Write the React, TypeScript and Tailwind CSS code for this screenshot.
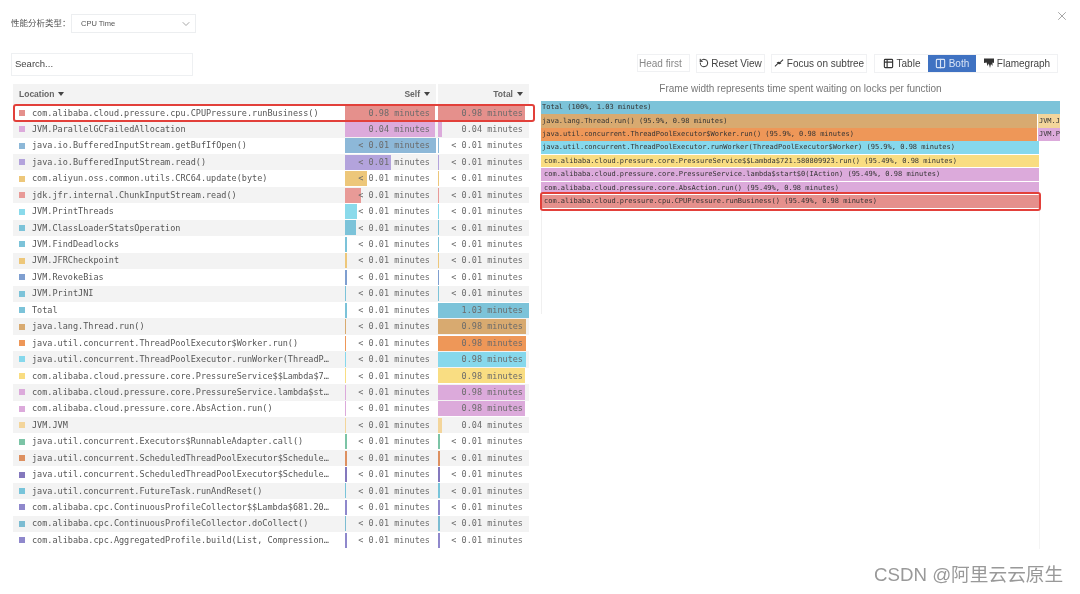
import { ChevronDown, Columns2, RotateCcw, Table2, X } from 'lucide-react'

type Row = {
  name: string
  color: string
  self: string
  total: string
  selfBar: number
  totalBar: number
}

const lt = '< 0.01 minutes'

const rows: Row[] = [
  { name: 'com.alibaba.cloud.pressure.cpu.CPUPressure.runBusiness()', color: '#e5908c', self: '0.98 minutes', total: '0.98 minutes', selfBar: 90, totalBar: 87 },
  { name: 'JVM.ParallelGCFailedAllocation', color: '#dcaadb', self: '0.04 minutes', total: '0.04 minutes', selfBar: 90, totalBar: 4 },
  { name: 'java.io.BufferedInputStream.getBufIfOpen()', color: '#8db8d8', self: lt, total: lt, selfBar: 91, totalBar: 1 },
  { name: 'java.io.BufferedInputStream.read()', color: '#b3a3dc', self: lt, total: lt, selfBar: 46, totalBar: 1 },
  { name: 'com.aliyun.oss.common.utils.CRC64.update(byte)', color: '#edc77a', self: lt, total: lt, selfBar: 22, totalBar: 1 },
  { name: 'jdk.jfr.internal.ChunkInputStream.read()', color: '#e89a97', self: lt, total: lt, selfBar: 16, totalBar: 1 },
  { name: 'JVM.PrintThreads', color: '#8adaeb', self: lt, total: lt, selfBar: 12, totalBar: 1 },
  { name: 'JVM.ClassLoaderStatsOperation', color: '#7cc3d9', self: lt, total: lt, selfBar: 11, totalBar: 1 },
  { name: 'JVM.FindDeadlocks', color: '#7cc3d9', self: lt, total: lt, selfBar: 2, totalBar: 1 },
  { name: 'JVM.JFRCheckpoint', color: '#edc77a', self: lt, total: lt, selfBar: 2, totalBar: 1 },
  { name: 'JVM.RevokeBias', color: '#7f9fd0', self: lt, total: lt, selfBar: 2, totalBar: 1 },
  { name: 'JVM.PrintJNI', color: '#7cc3d9', self: lt, total: lt, selfBar: 1, totalBar: 1 },
  { name: 'Total', color: '#7cc3d9', self: lt, total: '1.03 minutes', selfBar: 2, totalBar: 91 },
  { name: 'java.lang.Thread.run()', color: '#d8aa70', self: lt, total: '0.98 minutes', selfBar: 1, totalBar: 88 },
  { name: 'java.util.concurrent.ThreadPoolExecutor$Worker.run()', color: '#ee9758', self: lt, total: '0.98 minutes', selfBar: 1, totalBar: 88 },
  { name: 'java.util.concurrent.ThreadPoolExecutor.runWorker(ThreadP…', color: '#86d8ec', self: lt, total: '0.98 minutes', selfBar: 1, totalBar: 88 },
  { name: 'com.alibaba.cloud.pressure.core.PressureService$$Lambda$7…', color: '#f9dd82', self: lt, total: '0.98 minutes', selfBar: 1, totalBar: 87 },
  { name: 'com.alibaba.cloud.pressure.core.PressureService.lambda$st…', color: '#dcaadb', self: lt, total: '0.98 minutes', selfBar: 1, totalBar: 87 },
  { name: 'com.alibaba.cloud.pressure.core.AbsAction.run()', color: '#dcaadb', self: lt, total: '0.98 minutes', selfBar: 1, totalBar: 87 },
  { name: 'JVM.JVM', color: '#f3d59b', self: lt, total: '0.04 minutes', selfBar: 1, totalBar: 4 },
  { name: 'java.util.concurrent.Executors$RunnableAdapter.call()', color: '#7cc4a6', self: lt, total: lt, selfBar: 2, totalBar: 2 },
  { name: 'java.util.concurrent.ScheduledThreadPoolExecutor$Schedule…', color: '#dd9060', self: lt, total: lt, selfBar: 2, totalBar: 2 },
  { name: 'java.util.concurrent.ScheduledThreadPoolExecutor$Schedule…', color: '#8478bd', self: lt, total: lt, selfBar: 2, totalBar: 2 },
  { name: 'java.util.concurrent.FutureTask.runAndReset()', color: '#78c4da', self: lt, total: lt, selfBar: 1, totalBar: 2 },
  { name: 'com.alibaba.cpc.ContinuousProfileCollector$$Lambda$681.20…', color: '#8f88cc', self: lt, total: lt, selfBar: 2, totalBar: 2 },
  { name: 'com.alibaba.cpc.ContinuousProfileCollector.doCollect()', color: '#7cbcd2', self: lt, total: lt, selfBar: 1, totalBar: 2 },
  { name: 'com.alibaba.cpc.AggregatedProfile.build(List, Compression…', color: '#8f88cc', self: lt, total: lt, selfBar: 2, totalBar: 2 },
]

const frames = [
  { label: 'java.util.concurrent.ThreadPoolExecutor.runWorker(ThreadPoolExecutor$Worker) (95.9%, 0.98 minutes)', color: '#86d8ec', inset: false },
  { label: 'com.alibaba.cloud.pressure.core.PressureService$$Lambda$721.580809923.run() (95.49%, 0.98 minutes)', color: '#f9dd82', inset: true },
  { label: 'com.alibaba.cloud.pressure.core.PressureService.lambda$start$0(IAction) (95.49%, 0.98 minutes)', color: '#dcaadb', inset: true },
  { label: 'com.alibaba.cloud.pressure.core.AbsAction.run() (95.49%, 0.98 minutes)', color: '#dcaadb', inset: true },
  { label: 'com.alibaba.cloud.pressure.cpu.CPUPressure.runBusiness() (95.49%, 0.98 minutes)', color: '#e5908c', inset: true },
]

const mono = "font-['DejaVu_Sans_Mono','Liberation_Mono',monospace]"

const Caret = () => (
  <span className="ml-1 inline-block border-x-[3.5px] border-t-[4px] border-x-transparent border-t-[#444]" />
)

const TableRow = ({ row, index }: { row: Row; index: number }) => (
  <div className={`flex h-[16.44px] items-center ${index % 2 === 1 ? 'bg-[#f3f3f3]' : 'bg-white'}`}>
    <div className="flex w-[332px] items-center pl-[6px]">
      <span className="mr-[7px] size-[6px] shrink-0" style={{ background: row.color }} />
      <span className="whitespace-pre text-[8.5px] text-[#555]">{row.name}</span>
    </div>
    <div className="relative mr-[2px] flex h-[15px] w-[91px] items-center justify-end pr-[6px]">
      <span className="absolute inset-y-0 left-0" style={{ width: row.selfBar, background: row.color }} />
      <span className="relative whitespace-pre text-[8.5px] text-[#6b6b6b]">{row.self}</span>
    </div>
    <div className="relative flex h-[15px] w-[91px] items-center justify-end pr-[6px]">
      <span className="absolute inset-y-0 left-0" style={{ width: row.totalBar, background: row.color }} />
      <span className="relative whitespace-pre text-[8.5px] text-[#6b6b6b]">{row.total}</span>
    </div>
  </div>
)

const FlameIcon = () => (
  <svg viewBox="0 0 12 12" className="size-[12px]" fill="#333">
    <path d="M1 1.5h10v4.5L9.5 5.5v3.5L8 7l-1 4-1.2-4.5L4.5 9 3.6 5.5 1 6z" />
  </svg>
)

const FocusIcon = () => (
  <svg viewBox="0 0 12 12" className="size-[10px]" fill="#333">
    <path d="M6.8 5.2 10.5 1.5l.8.8-3.7 3.7 1.4 1.2H5.6V3.8zM5.2 6.8 1.5 10.5l-.8-.8L4.4 6 3 4.8h3.4v3.4z" />
  </svg>
)

export default function App() {
  return (
    <div className="relative h-[594px] w-[1080px] overflow-hidden bg-white font-['Liberation_Sans',sans-serif] blur-[0.3px]">
      <div className="flex">
        <div className="w-[541px] shrink-0 pl-[11px]">
          <div className="mt-[14px] flex h-[19px] items-center">
            <span className="w-[60px] font-['Liberation_Sans','Noto_Sans_CJK_SC',sans-serif] text-[8.5px] text-[#555]">性能分析类型：</span>
            <div className="flex h-[19px] w-[125px] items-center justify-between border border-[#eceef0] pl-[9px] pr-[3px] text-[7.5px] text-[#555]">
              CPU Time
              <ChevronDown className="size-[12px] text-[#888]" strokeWidth={1.5} />
            </div>
          </div>
          <div className="mt-[20px] flex h-[23px] w-[182px] items-center border border-[#eef0f2] pl-[3px] text-[9.5px] text-[#444]">
            Search...
          </div>
          <div className={`ml-[2px] mt-[8px] w-[516px] ${mono}`}>
            <div className="flex h-[20.7px] items-stretch font-['Liberation_Sans',sans-serif] text-[8.5px] font-bold text-[#666]">
              <div className="flex w-[332px] items-center bg-[#f3f3f3] pl-[6px]">
                Location
                <Caret />
              </div>
              <div className="mr-[2px] flex w-[91px] items-center justify-end bg-[#f3f3f3] pr-[6px]">
                Self
                <Caret />
              </div>
              <div className="flex w-[91px] items-center justify-end bg-[#f3f3f3] pr-[6px]">
                Total
                <Caret />
              </div>
            </div>
            {rows.map((row, i) => (
              <TableRow key={`${row.name}-${i}`} row={row} index={i} />
            ))}
          </div>
        </div>

        <div className="w-[519px] shrink-0">
          <div className="ml-[96px] mt-[54px] flex h-[18px] items-center text-[10px] text-[#444]">
            <div className="flex h-[18px] w-[53px] items-center border border-[#f0f1f3] pl-[1px] text-[#888]">Head first</div>
            <div className="ml-[6px] flex h-[19px] w-[69px] items-center justify-center gap-[2px] border border-[#f0f1f3]">
              <RotateCcw className="size-[10px] text-[#333]" strokeWidth={2.4} />
              Reset View
            </div>
            <div className="ml-[6px] flex h-[19px] w-[96px] items-center justify-center gap-[3px] border border-[#f0f1f3]">
              <FocusIcon />
              Focus on subtree
            </div>
            <div className="ml-[7px] flex h-[19px] border border-[#f0f1f3]">
              <div className="flex w-[53px] items-center justify-center gap-[3px]">
                <Table2 className="size-[11px] text-[#333]" strokeWidth={2.5} />
                Table
              </div>
              <div className="flex w-[48px] items-center justify-center gap-[3px] bg-[#3f72c2] text-[#d7e3f5]">
                <Columns2 className="size-[11px]" strokeWidth={2.5} />
                Both
              </div>
              <div className="flex w-[81px] items-center justify-center gap-[2px]">
                <FlameIcon />
                Flamegraph
              </div>
            </div>
          </div>
          <div className="mt-[11px] text-center text-[10px] leading-[11px] text-[#777]">
            Frame width represents time spent waiting on locks per function
          </div>
          <div className={`relative mt-[7px] w-[519px] text-[7px] text-[#333] ${mono}`}>
            <div className="flex h-[13.45px] items-center bg-[#7cc3d9] pl-[1px]">Total (100%, 1.03 minutes)</div>
            <div className="flex h-[13.45px]">
              <div className="flex w-[498px] items-center bg-[#d8aa70] pl-[1px]">java.lang.Thread.run() (95.9%, 0.98 minutes)</div>
              <div className="flex flex-1 items-center border-l border-white bg-[#f3d59b] pl-[1px]">JVM.J</div>
            </div>
            <div className="flex h-[13.45px]">
              <div className="flex w-[498px] items-center bg-[#ee9758] pl-[1px]">java.util.concurrent.ThreadPoolExecutor$Worker.run() (95.9%, 0.98 minutes)</div>
              <div className="flex flex-1 items-center border-l border-white bg-[#dcaadb] pl-[1px]">JVM.P</div>
            </div>
            {frames.map(f => (
              <div
                key={f.label}
                className={`flex h-[13.45px] w-[498px] items-center border-b border-white ${f.inset ? 'pl-[3px]' : 'pl-[1px]'}`}
                style={{ background: f.color }}
              >
                {f.label}
              </div>
            ))}
            <div className="flex">
              <div className="h-[105px] w-px bg-[#f0f0f0]" />
              <div className="ml-[497px] h-[340px] w-px bg-[#f4f4f4]" />
            </div>
          </div>
        </div>
      </div>

      {/* highlight boxes and overlays */}
      <div className="absolute left-[13px] top-[104px] h-[18px] w-[522px] rounded-[3px] border-2 border-[#e2403a]" />
      <div className="absolute left-[540px] top-[192px] h-[19px] w-[501px] rounded-[3px] border-2 border-[#e2403a]" />
      <X className="absolute left-[1055px] top-[9px] size-[14px] text-[#999]" strokeWidth={1.5} />
      <div className="absolute left-[874px] top-[565px] font-['Liberation_Sans','Noto_Sans_CJK_SC',sans-serif] text-[18.7px] leading-[20px] text-[#999]">
        CSDN @阿里云云原生
      </div>
    </div>
  )
}
